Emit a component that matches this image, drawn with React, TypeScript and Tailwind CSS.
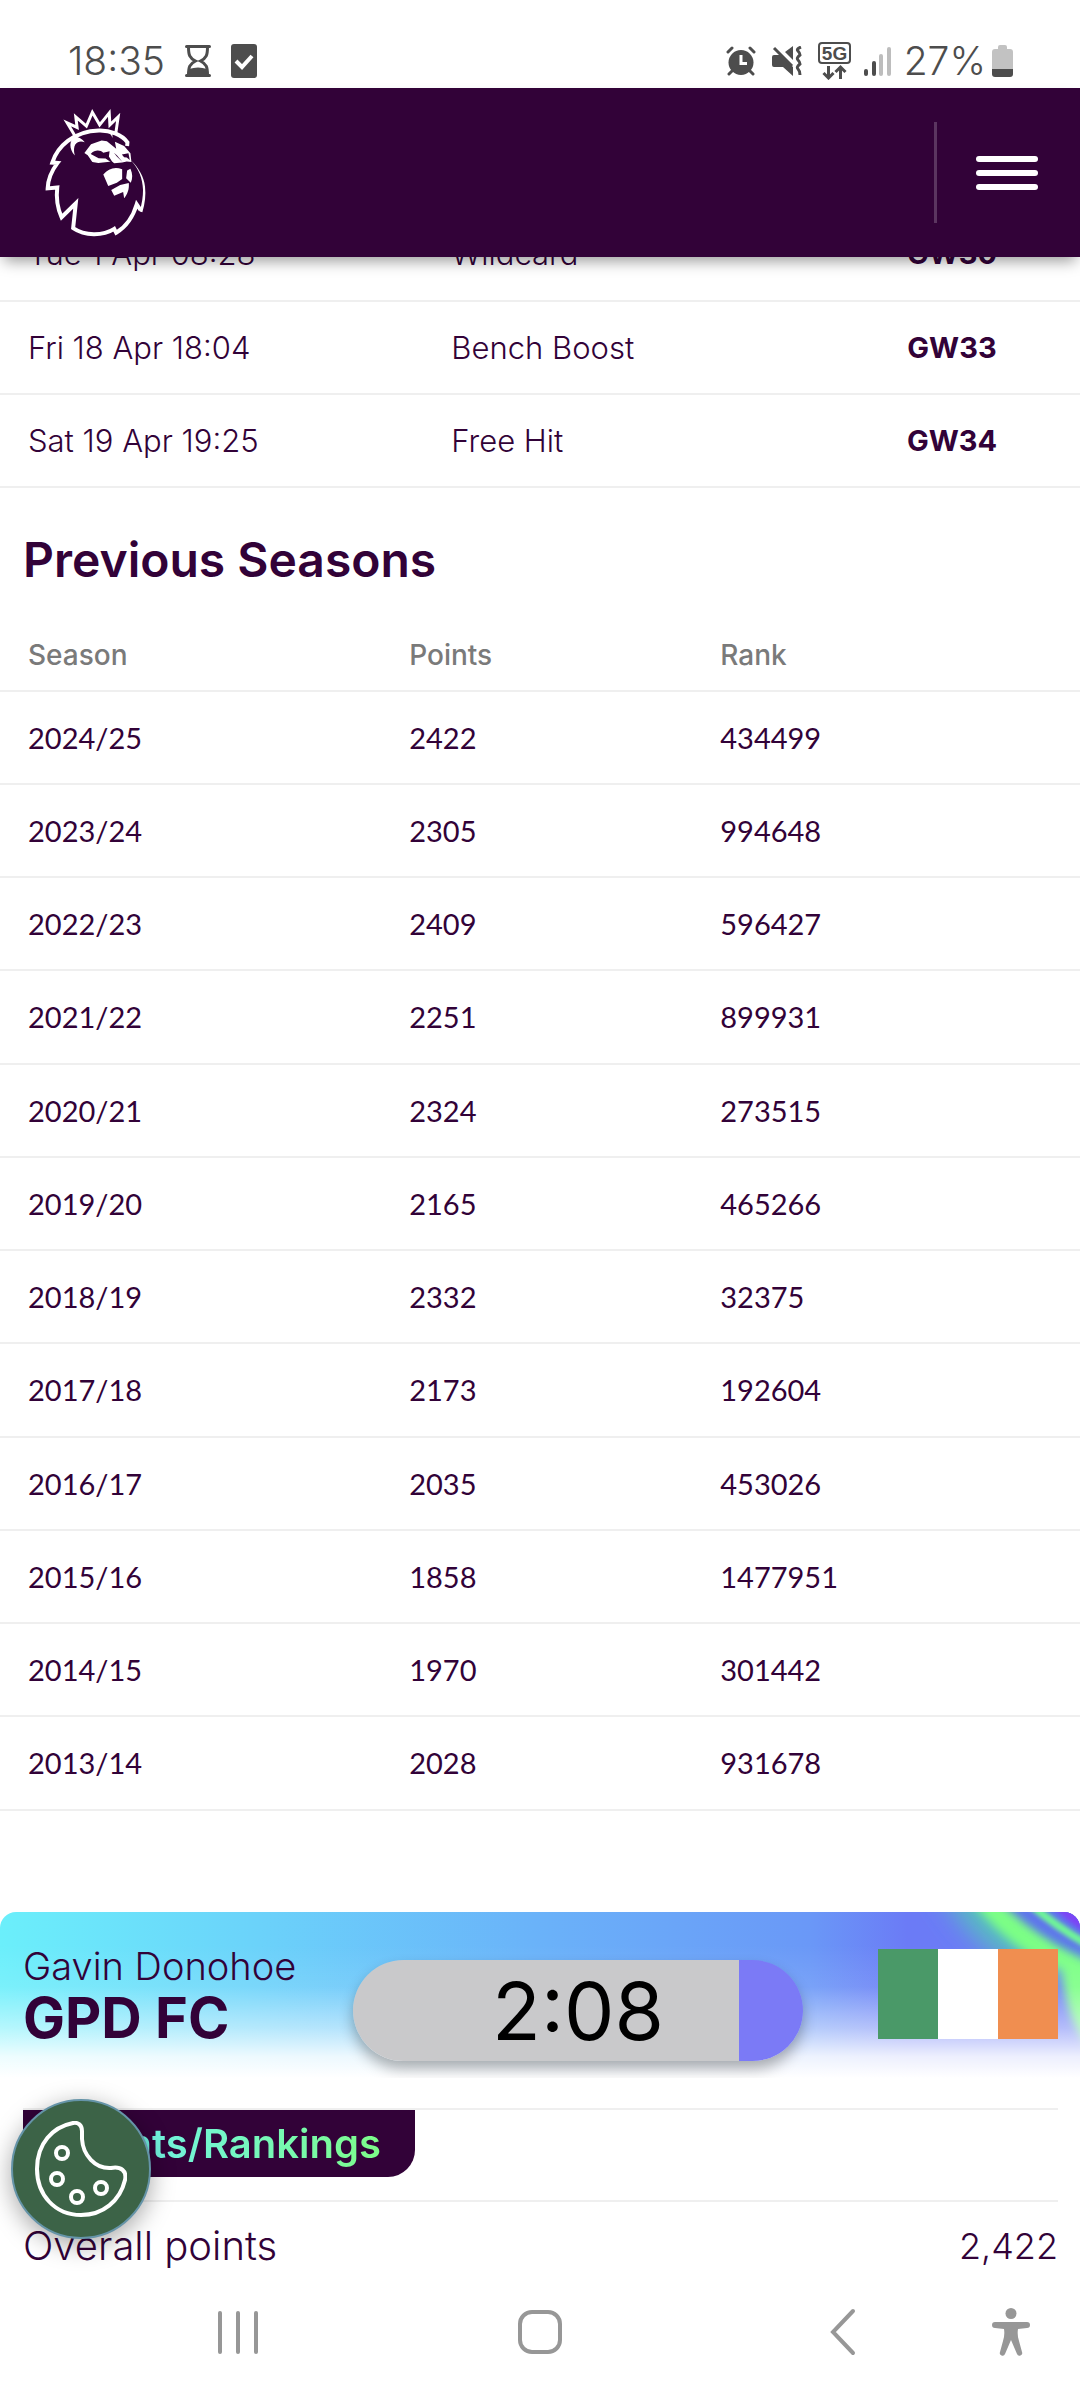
import React from "react";

const chips = [
  { date: "Tue 1 Apr 08:28", name: "Wildcard", active: "GW30" },
  { date: "Fri 18 Apr 18:04", name: "Bench Boost", active: "GW33" },
  { date: "Sat 19 Apr 19:25", name: "Free Hit", active: "GW34" },
];

const seasons = [
  { season: "2024/25", points: 2422, rank: 434499 },
  { season: "2023/24", points: 2305, rank: 994648 },
  { season: "2022/23", points: 2409, rank: 596427 },
  { season: "2021/22", points: 2251, rank: 899931 },
  { season: "2020/21", points: 2324, rank: 273515 },
  { season: "2019/20", points: 2165, rank: 465266 },
  { season: "2018/19", points: 2332, rank: 32375 },
  { season: "2017/18", points: 2173, rank: 192604 },
  { season: "2016/17", points: 2035, rank: 453026 },
  { season: "2015/16", points: 1858, rank: 1477951 },
  { season: "2014/15", points: 1970, rank: 301442 },
  { season: "2013/14", points: 2028, rank: 931678 },
];

const StatusBar = () => (
  <div className="flex h-[88px] items-end justify-between bg-white pl-[68px] pr-[67px] text-[#4d4d4d]">
    <div className="flex h-[54px] items-center gap-5">
      <span className="text-[39px] leading-[54px] font-light">18:35</span>
      <svg width="26" height="32" viewBox="0 0 26 32" fill="none">
        <path
          d="M1.5 1.5h23M1.5 30.5h23"
          stroke="currentColor"
          strokeWidth="3"
          strokeLinecap="round"
        />
        <path
          d="M3.5 2c0 8 1 11 7 14c-6 3-7 6-7 14M22.5 2c0 8-1 11-7 14c6 3 7 6 7 14"
          stroke="currentColor"
          strokeWidth="3"
        />
        <path d="M4 24q9-3 18 0v6H4z" fill="currentColor" />
      </svg>
      <svg width="26" height="34" viewBox="0 0 26 34" fill="none">
        <rect width="26" height="34" rx="3" fill="currentColor" />
        <path d="M5 17l6 6L21 12" stroke="white" strokeWidth="4" />
      </svg>
    </div>
    <div className="flex h-[54px] items-center">
      <svg width="30" height="30" viewBox="0 0 30 30" fill="none">
        <circle cx="15" cy="16.5" r="12.5" fill="currentColor" />
        <path
          d="M2 6l4-4M28 6l-4-4M6 25l-3 3M24 25l3 3"
          stroke="currentColor"
          strokeWidth="3"
          strokeLinecap="round"
        />
        <path d="M15 9v8.5h6" stroke="white" strokeWidth="3" />
      </svg>
      <svg
        className="ml-4"
        width="30"
        height="30"
        viewBox="0 0 30 30"
        fill="none"
      >
        <path
          d="M2 9h6l13 12v9l-10-9H2q-2 0-2-2v-8q0-2 2-2zM13 6l8-6v14z"
          fill="currentColor"
        />
        <path d="M2 2l18 18" stroke="currentColor" strokeWidth="3" />
        <path
          d="M29 1q-5 2-3 4t2 4q-4 3-2 5t2 4q-4 3-2 5t2 6"
          stroke="currentColor"
          strokeWidth="3"
        />
      </svg>
      <svg
        className="ml-4"
        width="33"
        height="38"
        viewBox="0 0 33 38"
        fill="none"
        stroke="currentColor"
      >
        <rect x="1" y="1" width="31" height="20" rx="3" strokeWidth="2" />
        <text
          x="16.5"
          y="18"
          textAnchor="middle"
          fontSize="19"
          fontWeight="700"
          fontFamily="Liberation Sans, sans-serif"
          fill="currentColor"
          stroke="none"
        >
          5G
        </text>
        <path
          d="M10.5 24v12M5.5 31l5 5l5-5M22.5 37V25M17.5 30l5-5l5 5"
          strokeWidth="3"
        />
      </svg>
      <svg
        className="ml-[13px]"
        width="27"
        height="30"
        viewBox="0 0 27 30"
        fill="currentColor"
      >
        <rect x="0" y="23" width="4" height="7" rx="2" />
        <rect x="8" y="15" width="4" height="15" rx="2" />
        <rect x="15" y="8" width="4" height="22" rx="2" fill="#bdbdbd" />
        <rect x="23" y="1" width="4" height="29" rx="2" fill="#bdbdbd" />
      </svg>
      <span className="ml-[13px] text-[39px] leading-[54px] font-light">
        27%
      </span>
      <svg className="ml-1.5" width="21" height="32" viewBox="0 0 21 32">
        <path
          d="M8 0h5q2 0 2 2v2h3q3 0 3 3v18H0V7q0-3 3-3h3V2q0-2 2-2z"
          fill="#c2c2c2"
        />
        <path d="M0 24h21v5q0 3-3 3H3q-3 0-3-3z" fill="currentColor" />
      </svg>
    </div>
  </div>
);

const LionLogo = () => (
  <svg width="101" height="129" viewBox="45 38 305 388" fill="none">
    <path
      d="M137 124L112 82L142 96L138 64L170 92L188 50L210 88L239 52L241 88L266 64L259 112"
      stroke="white"
      strokeWidth="9"
      strokeMiterlimit="8"
    />
    <path
      d="M293 152L294 141C278 118 240 104 208 105C130 107 82 155 67 202L83 203C64 228 54 254 53 280L82 277C78 310 84 342 95 367L138 325L130 400C165 424 220 424 254 402L260 414C290 396 312 362 322 328L334 346"
      stroke="white"
      strokeWidth="12"
      strokeMiterlimit="6"
    />
    <path
      d="M305 196C328 222 340 250 341 285C341 305 338 325 331 350L339 352C347 325 350 300 347 274C344 246 328 218 305 196z"
      fill="white"
    />
    <path
      d="M165 141C150 134 125 140 135 181C117 160 118 136 134 124C146 124 158 130 165 141zM232 106L248 108L249 128C245 118 240 113 232 106z"
      fill="white"
    />
    <path
      d="M164 173L184 147L216 135L232 138L260 160L256 139L284 152L303 174L306 200L292 199L278 202L254 204L247 199L206 203L188 200L174 180z"
      fill="white"
    />
    <path
      d="M183 176C196 162 212 164 221 172L240 168L238 184L252 206L228 190L207 189zM253 172L262 180L279 200L262 184zM277 178L297 174L301 194L292 187L284 186z"
      fill="#320238"
    />
    <path
      d="M221 238C236 221 254 214 278 222V252L262 263L236 273zM293 226L303 221C310 236 310 251 304 263L290 249zM245 285L272 270L298 264C300 282 294 298 284 310L281 291L254 302z"
      fill="white"
    />
  </svg>
);

const BannerStreaks = () => (
  <svg
    className="absolute top-0 right-0"
    width="280"
    height="166"
    viewBox="0 0 280 166"
    fill="none"
  >
    <defs>
      <filter id="soft" x="-50%" y="-50%" width="200%" height="200%">
        <feGaussianBlur stdDeviation="13" />
      </filter>
      <filter id="medium" x="-50%" y="-50%" width="200%" height="200%">
        <feGaussianBlur stdDeviation="5" />
      </filter>
      <filter id="crisp" x="-50%" y="-50%" width="200%" height="200%">
        <feGaussianBlur stdDeviation="2" />
      </filter>
    </defs>
    <path
      d="M136 -30H320V60H250Q190 60 136 -30z"
      fill="#57c0be"
      filter="url(#soft)"
    />
    <path
      d="M164 -20H203Q244 30 310 60V150Q268 130 262 58Q215 44 164 -20z"
      fill="#7bff85"
      filter="url(#medium)"
    />
    <path
      d="M200 -10H300V50Q245 32 200 -10z"
      fill="#5f74ec"
      filter="url(#medium)"
    />
    <path
      d="M230 -8Q258 16 290 34"
      stroke="#6ff796"
      strokeWidth="8"
      filter="url(#crisp)"
    />
    <path d="M250 -8H296V27Q266 10 250 -8z" fill="#7b45f5" filter="url(#crisp)" />
  </svg>
);

export default function App() {
  return (
    <div className="bg-white font-['Inter',sans-serif] text-[#320238]">
      <StatusBar />
      <header className="relative z-10 flex h-[169px] items-center justify-between bg-[#320238] pr-[42px] pl-[45px] shadow-[0_8px_14px_-4px_rgba(0,0,0,0.4)]">
        <a href="#" aria-label="Home">
          <LionLogo />
        </a>
        <div className="flex items-center gap-[39px]">
          <div className="h-[101px] w-[3px] bg-[#5b3560]" />
          <button type="button" aria-label="Menu" className="space-y-2">
            <span className="block h-1.5 w-[62px] rounded-full bg-white" />
            <span className="block h-1.5 w-[62px] rounded-full bg-white" />
            <span className="block h-1.5 w-[62px] rounded-full bg-white" />
          </button>
        </div>
      </header>

      {/* the list is scrolled part of the way under the header */}
      <main className="-mt-[49px]">
        <table className="w-full table-fixed border-collapse text-[31px] leading-10 font-light">
          <colgroup>
            <col className="w-[39.2%]" />
            <col className="w-[37.1%]" />
            <col />
          </colgroup>
          <tbody>
            {chips.map((chip) => (
              <tr key={chip.date} className="h-[93px] border-b-2 border-[#efefef]">
                <td className="pl-7">{chip.date}</td>
                <td className="pl-7">{chip.name}</td>
                <td className="text-center text-[29px] font-bold">
                  {chip.active}
                </td>
              </tr>
            ))}
          </tbody>
        </table>

        <h2 className="mt-10 mb-7 pl-[23px] text-[48px] leading-[64px] font-semibold">
          Previous Seasons
        </h2>
        <table className="w-full table-fixed border-collapse text-left text-[29px] leading-10">
          <colgroup>
            <col className="w-[35.3%]" />
            <col className="w-[28.8%]" />
            <col />
          </colgroup>
          <thead className="text-[28px] text-[#7a7a7a]">
            <tr className="h-[71px] border-b-2 border-[#efefef]">
              <th className="pl-7 font-medium">Season</th>
              <th className="pl-7 font-medium">Points</th>
              <th className="pl-7 font-medium">Rank</th>
            </tr>
          </thead>
          <tbody className="font-['Lato',sans-serif]">
            {seasons.map((row, i) => (
              <tr
                key={row.season}
                className={`border-b-2 border-[#efefef] ${
                  i % 4 === 3 ? "h-[94px]" : "h-[93px]"
                }`}
              >
                <td className="pl-7">{row.season}</td>
                <td className="pl-7">{row.points}</td>
                <td className="pl-7">{row.rank}</td>
              </tr>
            ))}
          </tbody>
        </table>

        <section className="relative mt-[101px] h-[166px] overflow-hidden rounded-t-2xl bg-[linear-gradient(to_right,#6beffb_0%,#6bd2fa_24%,#6ab2f9_50%,#6a98f7_75%,#6b7bf6_84%,#6b7bf6_100%)]">
          <BannerStreaks />
          <div className="relative flex h-full items-start justify-between bg-[linear-gradient(to_bottom,#fff0_20%,#ffffff1a_45%,#ffffff80_70%,#ffffffe0_87%,#fff_100%)] pr-[22px] pl-[23px]">
            <div className="pt-[29px]">
              <div className="text-[38px] leading-[50px] font-light">
                Gavin Donohoe
              </div>
              <div className="text-[56px] leading-[54px] font-bold">GPD FC</div>
            </div>
            <div className="mt-[37px] flex h-[90px] w-[180px]">
              <div className="flex-1 bg-[#4a9968]" />
              <div className="flex-1 bg-white" />
              <div className="flex-1 bg-[#f08e50]" />
            </div>
          </div>
          <div className="absolute top-12 left-[353px] flex h-[101px] w-[450px] items-center justify-center rounded-full bg-[linear-gradient(to_right,#c9c9cb_386px,#7b7af6_386px)] text-[80px] leading-none text-black shadow-[0_8px_14px_rgba(0,0,0,0.3)]">
            2:08
          </div>
        </section>

        <section className="mt-[30px] mr-[22px] ml-[23px]">
          <div className="border-y-2 border-[#efefef] pb-[23px]">
            <h3 className="flex h-[67px] w-[392px] items-center justify-end rounded-br-[27px] bg-[#320238] pr-[34px] text-[40px] leading-[67px] font-semibold">
              <span className="bg-linear-to-r from-[#6feefb] to-[#7dfc88] bg-clip-text text-transparent">
                Points/Rankings
              </span>
            </h3>
          </div>
          <div className="flex justify-between pt-3.5 leading-[60px] font-light">
            <span className="text-[40px]">Overall points</span>
            <span className="text-[36px]">2,422</span>
          </div>
        </section>
      </main>

      <div className="relative">
        <button
          type="button"
          aria-label="Cookie settings"
          className="absolute -top-[177px] left-[11px] flex size-[140px] items-center justify-center rounded-full border-2 border-[#6594a8] bg-[#3c6347] shadow-[0_6px_24px_rgba(0,0,0,0.35)]"
        >
          <svg
            width="92"
            height="96"
            viewBox="0 0 92 96"
            fill="none"
            stroke="white"
            strokeWidth="4"
          >
            <path d="M38 2C43 1 47 4 47 10V18C48 34 60 48 76 47C86 45 92 50 90 59C85 80 68 94 46 94C20 94 2 74 2 48C2 22 18 6 38 2z" />
            <circle cx="27" cy="32" r="6" />
            <circle cx="22" cy="58" r="6" />
            <circle cx="42" cy="76" r="6" />
            <circle cx="66" cy="67" r="6" />
          </svg>
        </button>
      </div>

      <nav className="grid h-[124px] grid-cols-[236fr_368fr_238fr_98fr] place-items-center bg-white pr-5 pb-3 pl-[120px] text-[#979797]">
        <button type="button" aria-label="Recent apps" className="flex gap-3.5">
          <span className="h-[43px] w-1 rounded-full bg-current" />
          <span className="h-[43px] w-1 rounded-full bg-current" />
          <span className="h-[43px] w-1 rounded-full bg-current" />
        </button>
        <button
          type="button"
          aria-label="Home screen"
          className="size-11 rounded-[14px] border-4 border-current"
        />
        <button type="button" aria-label="Back">
          <svg width="26" height="48" viewBox="0 0 26 48" fill="none">
            <path
              d="M23 3L3 24l20 21"
              stroke="currentColor"
              strokeWidth="4"
              strokeLinecap="round"
            />
          </svg>
        </button>
        <button type="button" aria-label="Accessibility">
          <svg width="38" height="48" viewBox="0 0 38 48" fill="currentColor">
            <circle cx="19" cy="5.5" r="5.5" />
            <path d="M3 14h32a3 3 0 0 1 0 6l-9 1q-1 6 1 12l3 11a2.5 2.5 0 0 1-5 2l-6-14l-6 14a2.5 2.5 0 0 1-5-2l3-11q2-6 1-12l-9-1a3 3 0 0 1 0-6z" />
          </svg>
        </button>
      </nav>
    </div>
  );
}
